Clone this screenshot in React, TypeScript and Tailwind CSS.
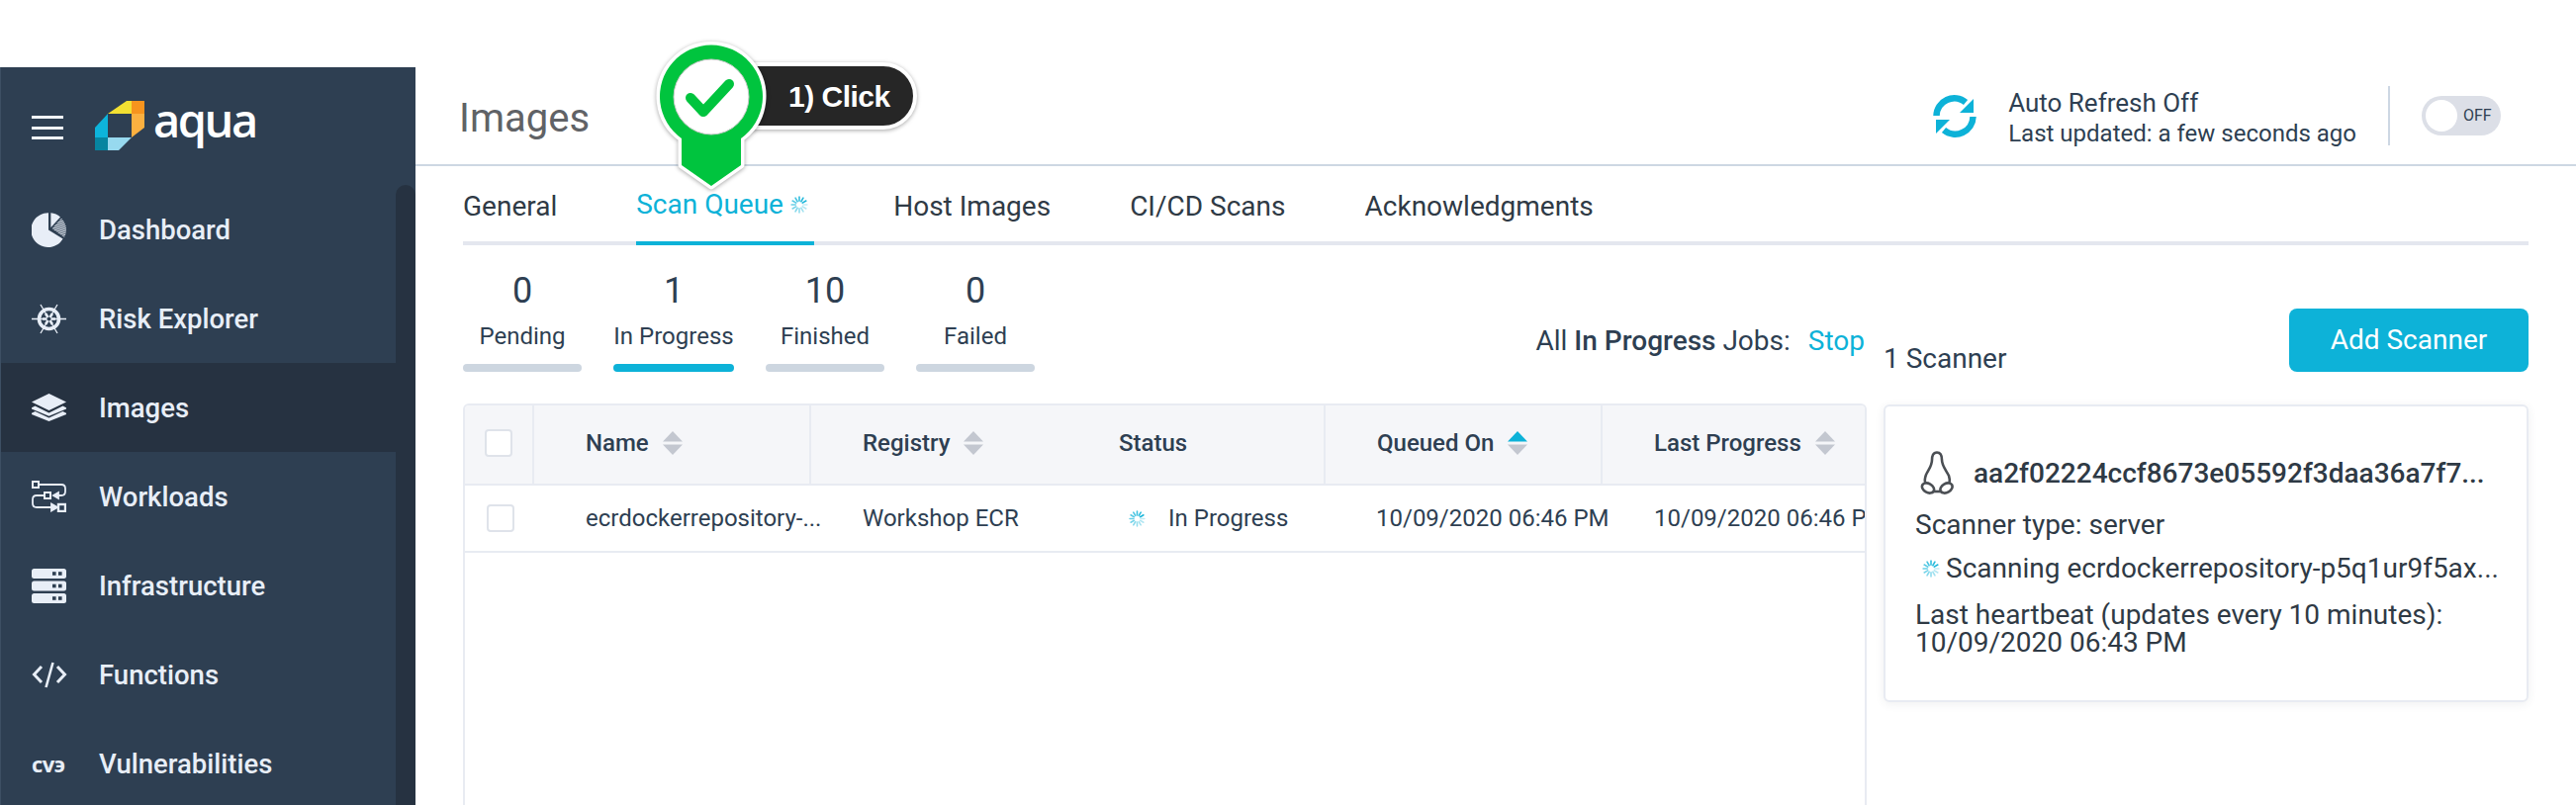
import type { ReactNode } from "react";

function Spinner({ size }: { size: number }) {
  const ticks = Array.from({ length: 12 }, (_, i) => i);
  return (
    <svg width={size} height={size} viewBox="0 0 24 24" className="shrink-0">
      {ticks.map((i) => (
        <line
          key={i}
          x1="12"
          y1="1.5"
          x2="12"
          y2="7"
          stroke="#0db2d8"
          strokeWidth="2.2"
          strokeLinecap="round"
          opacity={0.25 + (((i + 9) % 12) / 12) * 0.75}
          transform={`rotate(${i * 30} 12 12)`}
        />
      ))}
    </svg>
  );
}

function SortIcon({ active }: { active?: boolean }) {
  return (
    <svg width="20" height="24" viewBox="0 0 20 24" className="shrink-0">
      <path d="M10 0 L20 10.5 L0 10.5 Z" fill={active ? "#0db2d8" : "#c3c7d0"} />
      <path d="M10 24 L20 13.5 L0 13.5 Z" fill="#c3c7d0" />
    </svg>
  );
}

const iconColor = "#e8eef7";

function DashboardIcon() {
  return (
    <svg width="35" height="35" viewBox="0 0 35 35">
      <defs>
        <pattern id="hatch" width="2" height="2" patternUnits="userSpaceOnUse" patternTransform="rotate(70)">
          <rect width="1.1" height="2" fill={iconColor} />
        </pattern>
      </defs>
      <path d="M17 0.2 L17 17.5 L31.6 26.6 A17.4 17.4 0 1 1 17 0.2 Z" fill={iconColor} />
      <path d="M19.4 0.2 A17 17 0 0 1 29 4.4 L19.4 15 Z" fill={iconColor} />
      <path d="M20.6 16 L30 5.8 A17 17 0 0 1 35 16 A17 17 0 0 1 33 25 Z" fill="url(#hatch)" />
    </svg>
  );
}

function HelmIcon() {
  return (
    <svg width="35" height="31" viewBox="0 0 35 31" fill="none" stroke={iconColor}>
      <circle cx="17.5" cy="15.5" r="10" strokeWidth="3.6" />
      <path d="M0 15.5H35M9 1L26 30M26 1L9 30" strokeWidth="1.3" />
      <path d="M11 15.5H24M14 10L21 21M21 10L14 21" strokeWidth="2.6" />
      <circle cx="17.5" cy="15.5" r="2" fill="#2e3f52" stroke="none" />
    </svg>
  );
}

function LayersIcon() {
  return (
    <svg width="35" height="28" viewBox="0 0 35 28" fill={iconColor}>
      <path d="M17.5 0L35 8.5L17.5 17L0 8.5Z" />
      <path d="M3.5 12.6L17.5 19.4L31.5 12.6L35 14.3V15.6L17.5 22.8L0 15.6V14.3Z" />
      <path d="M3.5 18L17.5 24.4L31.5 18L35 19.7V21L17.5 28L0 21V19.7Z" />
    </svg>
  );
}

function WorkloadsIcon() {
  return (
    <svg width="35" height="32" viewBox="0 0 35 32" fill="none" stroke={iconColor} strokeWidth="1.8">
      <rect x="1" y="1" width="6" height="6" strokeWidth="2" />
      <path d="M7 4H30Q34 4 34 8V11Q34 15 30 15H25" />
      <path d="M27 12V18L22 15Z" fill={iconColor} />
      <rect x="13" y="12" width="6" height="6" strokeWidth="2" />
      <path d="M13 15H5Q1 15 1 19V23Q1 27 5 27H21" />
      <path d="M20 23.5V30.5L26 27Z" fill={iconColor} />
      <rect x="27" y="24" width="7" height="7" strokeWidth="2.4" />
    </svg>
  );
}

function ServerIcon() {
  const rows = [0, 12.5, 25];
  return (
    <svg width="35" height="35" viewBox="0 0 35 35">
      {rows.map((y) => (
        <g key={y}>
          <rect x="0" y={y} width="35" height="10" rx="2.5" fill={iconColor} />
          <rect x="21" y={y + 3.2} width="3.6" height="3.6" fill="#2e3f52" />
          <rect x="27" y={y + 3.2} width="3.6" height="3.6" fill="#2e3f52" />
        </g>
      ))}
    </svg>
  );
}

function CodeIcon() {
  return (
    <svg width="36" height="27" viewBox="0 0 36 27" fill="none" stroke={iconColor} strokeWidth="3">
      <path d="M10 5L2.5 13L10 21" />
      <path d="M26 5L33.5 13L26 21" />
      <path d="M21.5 1L14.5 26" strokeWidth="2.6" />
    </svg>
  );
}

function CveIcon() {
  return (
    <span className="text-[22px] leading-none font-bold tracking-[-0.5px] text-[#e8eef7] font-['Open_Sans',sans-serif]">
      cvэ
    </span>
  );
}

function Logo() {
  return (
    <svg width="50" height="50" viewBox="0 0 50 50" className="shrink-0">
      <path d="M13 13L32 0H37V13Z" fill="#f2e032" />
      <path d="M37 0H50V13H37Z" fill="#f7941e" />
      <path d="M37 13H50V27L37 37Z" fill="#fbb040" />
      <path d="M0 27L13 13V37H0Z" fill="#0db4db" />
      <path d="M0 37H13V50H0Z" fill="#0785a0" />
      <path d="M13 37H37L24 50H13Z" fill="#97d9ef" />
    </svg>
  );
}

const navItems: { label: string; icon: ReactNode; active?: boolean }[] = [
  { label: "Dashboard", icon: <DashboardIcon /> },
  { label: "Risk Explorer", icon: <HelmIcon /> },
  { label: "Images", icon: <LayersIcon />, active: true },
  { label: "Workloads", icon: <WorkloadsIcon /> },
  { label: "Infrastructure", icon: <ServerIcon /> },
  { label: "Functions", icon: <CodeIcon /> },
  { label: "Vulnerabilities", icon: <CveIcon /> },
];

function Sidebar() {
  return (
    <aside className="w-[420px] h-[746px] shrink-0 bg-[#2e3f52] border-l border-[#3d4f63] flex flex-col overflow-hidden">
      <div className="h-[119px] shrink-0 flex items-start pt-[34px] pl-[31px]">
        <div className="w-[32px] mt-[15px] flex flex-col gap-[7.5px]">
          <div className="h-[3px] bg-[#f1f4f8]" />
          <div className="h-[3px] bg-[#f1f4f8]" />
          <div className="h-[3px] bg-[#f1f4f8]" />
        </div>
        <div className="ml-[32px]">
          <Logo />
        </div>
        <span className="ml-[9px] -mt-[15px] text-[47px] leading-[68px] font-semibold tracking-[-2.5px] text-white font-['Open_Sans',sans-serif]">
          aqua
        </span>
      </div>
      <div className="flex flex-1 min-h-0">
        <nav className="flex-1">
          {navItems.map((item) => (
            <div
              key={item.label}
              className={`h-[90px] flex items-center pl-[31px] ${item.active ? "bg-[#263241]" : ""}`}
            >
              <div className="w-[37px] flex justify-start">{item.icon}</div>
              <span className="ml-[31px] mt-[2px] text-[27.5px] font-medium text-[#e8eef7]">{item.label}</span>
            </div>
          ))}
        </nav>
        <div className="w-[20px] rounded-t-full bg-[#263241]" />
      </div>
    </aside>
  );
}

function RefreshIcon() {
  return (
    <svg width="44" height="43" viewBox="0 0 44 43" fill="none" className="shrink-0 mt-[1px]">
      <path d="M3.5 21A18 18 0 0 1 33 7.5" stroke="#0db2d8" strokeWidth="6.5" />
      <path d="M41 4V18H27Z" fill="#0db2d8" />
      <path d="M40.5 22A18 18 0 0 1 11 35.5" stroke="#0db2d8" strokeWidth="6.5" />
      <path d="M3 39V25H17Z" fill="#0db2d8" />
    </svg>
  );
}

function Header() {
  return (
    <header className="h-[98px] shrink-0 border-b-2 border-[#cdd7e3] box-content flex items-center pl-[44px] pr-[76px]">
      <h1 className="mt-[6px] text-[40px] text-[#606266]">Images</h1>
      <div className="ml-auto flex items-center">
        <RefreshIcon />
        <div className="ml-[32px] mt-[6px] text-[24px] leading-[31px] text-[#2e3f52]">
          <div className="text-[26px]">Auto Refresh Off</div>
          <div>Last updated: a few seconds ago</div>
        </div>
        <div className="ml-[32px] w-[2px] h-[60px] bg-[#cdd7e3]" />
        <div className="ml-[32px] w-[80px] h-[40px] rounded-full bg-[#dcdfe7] flex items-center pl-[4px]">
          <div className="w-[32px] h-[32px] rounded-full bg-white" />
          <span className="ml-[6px] text-[16px] text-[#2e3f52]">OFF</span>
        </div>
      </div>
    </header>
  );
}

function Tabs() {
  const tabs = ["General", "Scan Queue", "Host Images", "CI/CD Scans", "Acknowledgments"];
  return (
    <div className="h-[76px] shrink-0 border-b-4 border-[#e4e7ef] box-content -mb-[4px] flex gap-[80px]">
      {tabs.map((t) => {
        const active = t === "Scan Queue";
        return (
          <div
            key={t}
            className={`h-[80px] pt-[5px] pb-[4px] flex items-center gap-[7px] text-[28px] whitespace-nowrap ${
              active ? "w-[180px] border-b-4 border-[#0db2d8] text-[#0db2d8]" : "text-[#2f3a45]"
            }`}
          >
            {t}
            {active && <Spinner size={18} />}
          </div>
        );
      })}
    </div>
  );
}

const stats = [
  { n: "0", label: "Pending" },
  { n: "1", label: "In Progress", active: true },
  { n: "10", label: "Finished" },
  { n: "0", label: "Failed" },
];

function Stats() {
  return (
    <div className="flex gap-[32px] pt-[29px]">
      {stats.map((s) => (
        <div
          key={s.label}
          className={`flex flex-col items-center text-[#2e3f52] ${s.active ? "w-[122px]" : "w-[120px]"}`}
        >
          <div className="text-[36px] leading-[42px]">{s.n}</div>
          <div className="mt-[9px] text-[24px] leading-[32px] whitespace-nowrap">{s.label}</div>
          <div className={`mt-[12px] w-full h-[8px] rounded-full ${s.active ? "bg-[#0db2d8]" : "bg-[#cdd6e0]"}`} />
        </div>
      ))}
    </div>
  );
}

const columns = [
  { label: "Name", width: "w-[280px]" },
  { label: "Registry", width: "w-[259px]" },
  { label: "Status", width: "w-[261px]", plain: true },
  { label: "Queued On", width: "w-[280px]", active: true },
  { label: "Last Progress", width: "flex-1" },
];

function Checkbox({ offset }: { offset: string }) {
  return <div className={`w-[28px] h-[28px] rounded-[4px] border-2 border-[#dfe3ea] bg-white ${offset}`} />;
}

function QueueTable() {
  return (
    <div className="mt-[32px] w-[1419px] h-[406px] rounded-t-[6px] border-2 border-b-0 border-[#e8ebf2] overflow-hidden text-[#2e3f52] text-[24px]">
      <div className="h-[81px] flex bg-[#f5f6f9] border-b-2 border-[#e8ebf2]">
        <div className="w-[70px] shrink-0 flex items-center pb-[4px] border-r-2 border-[#e8ebf2]">
          <Checkbox offset="ml-[20px]" />
        </div>
        {columns.map((c, i) => (
          <div
            key={c.label}
            className={`${c.width} shrink-0 flex items-center pl-[52px] pb-[4px] gap-[14px] font-medium ${
              i < columns.length - 1 && i !== 1 ? "border-r-2 border-[#e8ebf2]" : ""
            }`}
          >
            {c.label}
            {!c.plain && <SortIcon active={c.active} />}
          </div>
        ))}
      </div>
      <div className="h-[68px] flex items-center border-b-2 border-[#e8ebf2] whitespace-nowrap">
        <div className="w-[70px] shrink-0">
          <Checkbox offset="ml-[22px]" />
        </div>
        <div className="w-[280px] shrink-0 pl-[52px]">ecrdockerrepository-...</div>
        <div className="w-[259px] shrink-0 pl-[52px]">Workshop ECR</div>
        <div className="w-[261px] shrink-0 pl-[62px] flex items-center gap-[23px]">
          <Spinner size={17} />
          In Progress
        </div>
        <div className="w-[280px] shrink-0 pl-[51px]">10/09/2020 06:46 PM</div>
        <div className="pl-[52px]">10/09/2020 06:46 PM</div>
      </div>
    </div>
  );
}

function ScannerCard() {
  return (
    <div className="mt-[33px] h-[301px] rounded-[6px] border-2 border-[#e8ebf2] bg-white shadow-[0_2px_10px_rgba(50,60,80,0.08)] px-[30px] pt-[45px] text-[28px] text-[#2f3a45] leading-[28px]">
      <div className="flex items-center h-[44px]">
        <svg width="36" height="44" viewBox="0 0 36 44" fill="none" stroke="#4b4f54" strokeWidth="2.6" className="ml-[4px] shrink-0">
          <path d="M6.5 33C5 30 5.5 28 7 24C10 18 13 15 13 9C13 5 14 1.5 18 1.5C22 1.5 23 5 23 9C23 15 27 19 30 25C31 28 31.5 30 30.5 33" />
          <ellipse cx="9" cy="37.5" rx="6.5" ry="4.5" transform="rotate(30 9 37.5)" />
          <ellipse cx="27.5" cy="37.5" rx="6.5" ry="4.5" transform="rotate(-30 27.5 37.5)" />
          <path d="M14 41H22" />
        </svg>
        <span className="ml-[19px] mt-[2px] font-medium whitespace-nowrap">aa2f02224ccf8673e05592f3daa36a7f7...</span>
      </div>
      <div className="mt-[17px]">Scanner type: server</div>
      <div className="mt-[16px] pl-[7px] flex items-center gap-[6px] whitespace-nowrap">
        <Spinner size={18} />
        <span>Scanning ecrdockerrepository-p5q1ur9f5ax...</span>
      </div>
      <div className="mt-[19px]">
        Last heartbeat (updates every 10 minutes):
        <br />
        10/09/2020 06:43 PM
      </div>
    </div>
  );
}

function Content() {
  return (
    <div className="pl-[48px] pr-[48px] flex flex-col flex-1 min-h-0">
      <Tabs />
      <div className="flex flex-1 min-h-0">
        <div className="w-[1436px] shrink-0 pr-[17px]">
          <div className="flex justify-between items-start">
            <Stats />
            <div className="mt-[86px] mr-[2px] text-[28px] leading-[30px] text-[#2e3f52] whitespace-nowrap">
              All <span className="font-medium">In Progress</span> Jobs:
              <span className="ml-[18px] text-[#0db2d8]">Stop</span>
            </div>
          </div>
          <QueueTable />
        </div>
        <div className="flex-1 min-w-0 pt-[68px]">
          <div className="h-[64px] flex items-end justify-between">
            <span className="text-[28px] leading-[28px] text-[#2e3f52] -mb-[1px]">1 Scanner</span>
            <button className="w-[242px] h-[64px] rounded-[8px] bg-[#0db2d8] text-white text-[28px]">Add Scanner</button>
          </div>
          <ScannerCard />
        </div>
      </div>
    </div>
  );
}

function ClickMarker() {
  return (
    <>
      <div className="absolute left-[680px] top-[63px] w-[247px] h-[68px] rounded-full border-4 border-white bg-[#262626] shadow-[0_1px_4px_rgba(0,0,0,0.35)] pl-[113px] flex items-center text-[30px] tracking-[-0.5px] font-bold text-white font-['Liberation_Sans',sans-serif] whitespace-nowrap">
        1) Click
      </div>
      <svg width="130" height="170" viewBox="0 0 130 170" className="absolute left-[654px] top-[30px]">
        <path
          d="M35 110A52 52 0 1 1 95 110V137L65 158L35 137Z"
          fill="#00c43e"
          stroke="white"
          strokeWidth="7"
          strokeLinejoin="round"
          paintOrder="stroke"
          className="drop-shadow-[0_1px_2px_rgba(0,0,0,0.35)]"
        />
        <circle cx="65" cy="68" r="38" fill="white" stroke="#c9c9c9" strokeWidth="1" />
        <path d="M44 69L57 83L83 55" fill="none" stroke="#00c43e" strokeWidth="10" strokeLinecap="round" strokeLinejoin="round" />
      </svg>
    </>
  );
}

export default function App() {
  return (
    <div className="relative w-[2604px] h-[814px] overflow-hidden bg-white pt-[68px] font-['Roboto',sans-serif]">
      <div className="flex h-[746px]">
        <Sidebar />
        <main className="flex-1 flex flex-col min-w-0">
          <Header />
          <Content />
        </main>
      </div>
      <ClickMarker />
    </div>
  );
}
